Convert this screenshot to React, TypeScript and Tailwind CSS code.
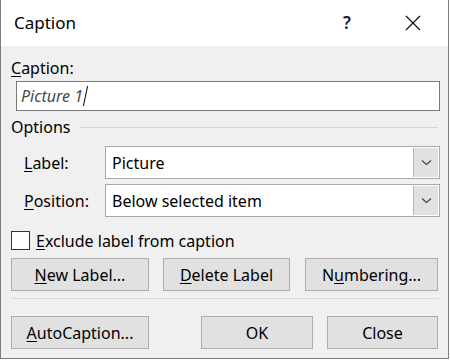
import React from "react";

const font = { fontFamily: '"Segoe UI", "Noto Sans", sans-serif' };

function Key({ children }: { children: React.ReactNode }) {
  return <span className="underline underline-offset-[2px] decoration-1">{children}</span>;
}

function Button({ w, children }: { w: string; children: React.ReactNode }) {
  return (
    <div className={`${w} h-[33px] flex items-center justify-center border border-[#adadad] bg-[#e1e1e1] text-[16px] text-black`}>
      {children}
    </div>
  );
}

function Combo({ value }: { value: string }) {
  return (
    <div className="w-[335px] h-[33px] flex border border-[#a8a8a8] bg-white">
      <div className="flex-1 flex items-center pl-[6px] text-[16px] text-black">{value}</div>
      <div className="w-[25px] my-[1px] mr-[1px] flex items-center justify-center bg-[#e1e1e1] border-l border-[#b4b4b4]">
        <svg width="11" height="7" viewBox="0 0 11 7">
          <path d="M1 1.5 L5.5 5.5 L10 1.5" fill="none" stroke="#444" strokeWidth="1.2" />
        </svg>
      </div>
    </div>
  );
}

export default function App() {
  return (
    <div className="w-[450px] h-[362px] bg-white" style={font}>
      <div className="w-[449px] h-[359px] flex flex-col border-x border-b border-[#7d7d7d] bg-[#f0f0f0]">
        {/* title bar */}
        <div className="h-[46px] shrink-0 bg-white flex items-center pl-[13px] text-[17px] text-black">
          <span>Caption</span>
          <span className="ml-auto w-[10px] text-[17px] font-semibold text-[#222] mr-[52px]">?</span>
          <svg width="16" height="16" viewBox="0 0 16 16" className="mr-[27px]">
            <path d="M1 1 L15 15 M15 1 L1 15" stroke="#111" strokeWidth="1.2" />
          </svg>
        </div>

        <div className="pl-[10px] flex flex-col">
          <div className="mt-[11px] h-[22px] leading-[22px] text-[16px] text-black">
            <Key>C</Key>aption:
          </div>
          <div className="mt-[2px] ml-[5px] w-[424px] h-[30px] flex items-center border border-[#7a7a7a] bg-white pl-[4px] text-[16px] italic text-[#4a4a4a]">
            Picture 1<span className="ml-[2px] inline-block w-[1px] h-[20px] bg-black -skew-x-12" />
          </div>

          <div className="mt-[5px] h-[22px] flex items-center text-[16px] text-black">
            <span>Options</span>
            <div className="ml-[10px] mr-[10px] flex-1 h-[1px] bg-[#d5d5d5]" />
          </div>

          <div className="mt-[8px] flex items-center">
            <div className="w-[94px] pl-[13px] text-[16px] text-black">
              <Key>L</Key>abel:
            </div>
            <Combo value="Picture" />
          </div>
          <div className="mt-[5px] flex items-center">
            <div className="w-[94px] pl-[13px] text-[16px] text-black">
              <Key>P</Key>osition:
            </div>
            <Combo value="Below selected item" />
          </div>

          <div className="mt-[14px] h-[19px] flex items-center">
            <div className="w-[19px] h-[19px] border border-[#333] bg-white" />
            <span className="ml-[6px] text-[16px] text-black">
              <Key>E</Key>xclude label from caption
            </span>
          </div>

          <div className="mt-[8px] flex">
            <Button w="w-[138px]">
              <span><Key>N</Key>ew Label...</span>
            </Button>
            <div className="ml-[14px]">
              <Button w="w-[127px]">
                <span><Key>D</Key>elete Label</span>
              </Button>
            </div>
            <div className="ml-[15px]">
              <Button w="w-[133px]">
                <span>N<Key>u</Key>mbering...</span>
              </Button>
            </div>
          </div>

          <div className="mt-[7px] mr-[9px] h-[1px] bg-[#d9d9d9]" />

          <div className="mt-[17px] flex">
            <Button w="w-[138px]">
              <span><Key>A</Key>utoCaption...</span>
            </Button>
            <div className="ml-[52px]">
              <Button w="w-[112px]">OK</Button>
            </div>
            <div className="ml-[14px]">
              <Button w="w-[111px]">Close</Button>
            </div>
          </div>
        </div>
      </div>
    </div>
  );
}
